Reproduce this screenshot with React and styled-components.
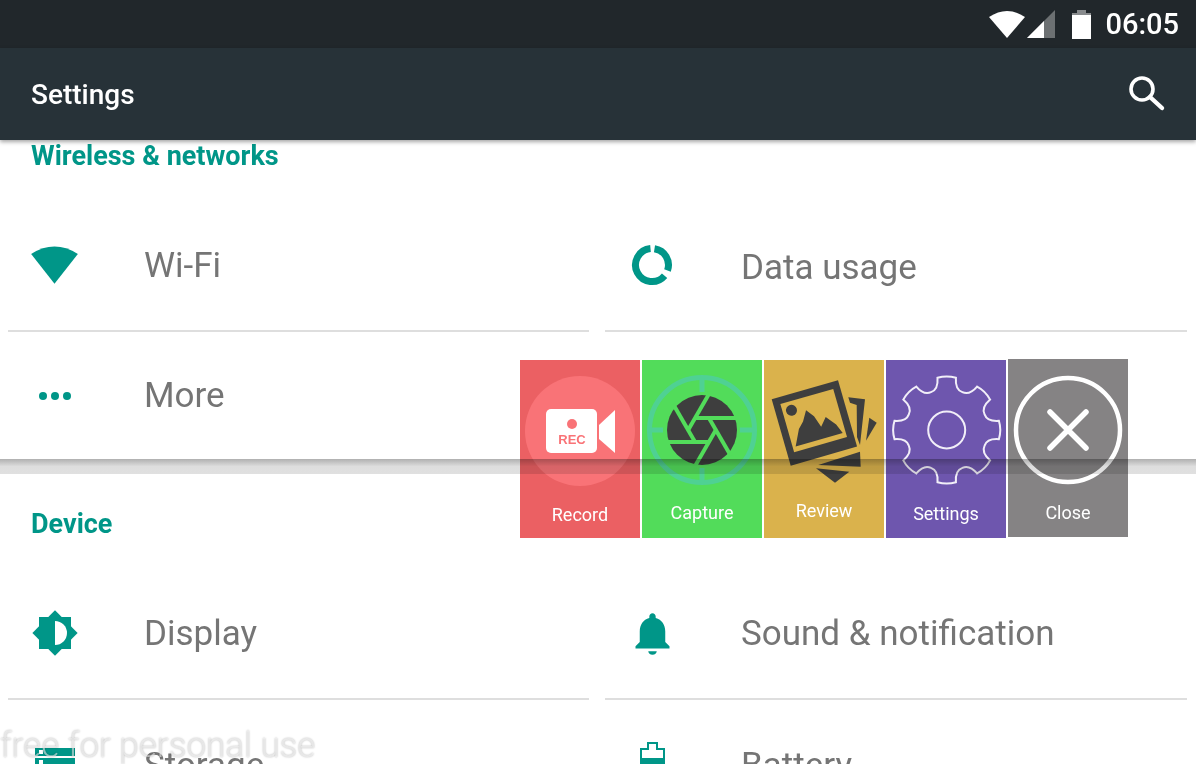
import React from "react";
import styled, { createGlobalStyle } from "styled-components";

const GlobalStyle = createGlobalStyle`
  html, body {
    margin: 0;
    padding: 0;
    background: #fff;
    font-family: "Roboto", "Liberation Sans", sans-serif;
  }
`;

const TEAL = "#009688";

const gearPath = () => {
  const pt = (r, deg) => {
    const rad = ((deg - 90) * Math.PI) / 180;
    return `${(r * Math.cos(rad)).toFixed(2)} ${(r * Math.sin(rad)).toFixed(2)}`;
  };
  let d = `M${pt(53, -10)}`;
  for (let i = 0; i < 8; i++) {
    const a = i * 45;
    d += ` Q${pt(55, a)} ${pt(53, a + 10)}`;
    d += ` C${pt(45, a + 11)} ${pt(41, a + 16)} ${pt(41, a + 22.5)}`;
    d += ` C${pt(41, a + 29)} ${pt(45, a + 34)} ${pt(53, a + 35)}`;
  }
  return d + " Z";
};

const WifiGlyph = ({ size = 48, color = TEAL }) => (
  <svg width={size} height={size * 0.85} viewBox="0 0 48 41">
    <path d="M0 9 Q23.5 -6 47 9 L23.5 39 Z" fill={color} />
  </svg>
);

const DataUsageIcon = () => (
  <svg width="42" height="42" viewBox="-21 -21 42 42" fill="none" stroke={TEAL} strokeWidth="7">
    <path d="M2.5 -16.3 A16.5 16.5 0 0 1 15.5 5.5" />
    <path d="M12.6 10.7 A16.5 16.5 0 1 1 -1.5 -16.4" />
  </svg>
);

const MoreIcon = () => (
  <svg width="36" height="12" viewBox="0 0 36 12" fill={TEAL}>
    <circle cx="6" cy="6" r="4" />
    <circle cx="18" cy="6" r="4" />
    <circle cx="30" cy="6" r="4" />
  </svg>
);

const DisplayIcon = () => (
  <svg width="46" height="46" viewBox="-23 -23 46 46">
    <rect x="-16" y="-16" width="32" height="32" fill={TEAL} />
    <rect x="-16" y="-16" width="32" height="32" fill={TEAL} transform="rotate(45)" />
    <path d="M0 -12 A12 12 0 0 1 0 12 Z" fill="#fff" />
  </svg>
);

const BellIcon = () => (
  <svg width="51" height="51" viewBox="0 0 24 24" fill={TEAL}>
    <path d="M12 22c1.1 0 2-.7 2-1.6h-4c0 .9.89 1.6 2 1.6zm6-6v-5c0-3.07-1.64-5.64-4.5-6.32V4c0-.83-.67-1.5-1.5-1.5s-1.5.67-1.5 1.5v.68C7.63 5.36 6 7.92 6 11v5l-2 2v1h16v-1l-2-2z" />
  </svg>
);

const StorageIcon = () => (
  <svg width="40" height="32" viewBox="0 0 40 32">
    <rect width="40" height="8" fill={TEAL} />
    <rect y="10" width="40" height="8" fill={TEAL} />
    <rect x="4" y="2" width="4" height="4" fill="#fff" />
    <rect x="4" y="12" width="4" height="4" fill="#fff" />
  </svg>
);

const BatteryRowIcon = () => (
  <svg width="25" height="46" viewBox="0 0 25 46">
    <path d="M7 0h11v6h7v40H0V6h7z" fill={TEAL} />
    <path d="M9 2h7v6h7v8H2V8h7z" fill="#fff" />
  </svg>
);

const StatusWifi = () => (
  <svg width="36" height="28" viewBox="0 0 36 28">
    <path d="M0 7 Q18 -5 36 7 L18 28 Z" fill="#fff" />
  </svg>
);

const StatusSignal = () => (
  <svg width="28" height="28" viewBox="0 0 28 28">
    <path d="M0 28 L28 0 V28 Z" fill="#6c7072" />
    <path d="M0 28 L17 11 V28 Z" fill="#fff" />
  </svg>
);

const StatusBattery = () => (
  <svg width="19" height="29" viewBox="0 0 19 29">
    <path d="M5 0h9v3h5v5H0V3h5z" fill="#878a8c" />
    <rect y="5" width="19" height="24" fill="#fff" />
  </svg>
);

const SearchIcon = () => (
  <svg width="38" height="38" viewBox="0 0 38 38" fill="none" stroke="#fff">
    <circle cx="14" cy="14" r="11" strokeWidth="3.6" />
    <path d="M22 22 L34 33" strokeWidth="4.4" strokeLinecap="round" />
  </svg>
);

const RecordArt = () => (
  <svg width="120" height="130" viewBox="0 0 120 130">
    <circle cx="60" cy="71" r="55" fill="#f97377" />
    <rect x="26" y="49" width="51" height="44" rx="5" fill="#fff" />
    <path d="M79 65 L95 50 V93 L79 79 Z" fill="#fff" />
    <circle cx="52" cy="64" r="5" fill="#f97377" />
    <text x="52" y="84" textAnchor="middle" fontFamily="Liberation Sans" fontWeight="700" fontSize="13" fill="#f97377">
      REC
    </text>
  </svg>
);

const CaptureArt = () => (
  <svg width="120" height="130" viewBox="0 0 120 130">
    <g fill="none" stroke="#4fd193" strokeWidth="5">
      <circle cx="60" cy="70" r="52.5" />
      <path d="M60 18V32 M60 108V122 M6 70H21 M98 70H113" />
    </g>
    <circle cx="60" cy="70" r="35" fill="#3e3e3e" />
    <g transform="translate(60 70)" stroke="#52dc5a" strokeWidth="4">
      {[0, 60, 120, 180, 240, 300].map((deg) => (
        <line key={deg} x1="37" y1="-12" x2="-6" y2="-12" transform={`rotate(${deg})`} />
      ))}
    </g>
  </svg>
);

const ReviewArt = () => (
  <svg width="120" height="130" viewBox="0 0 120 130">
    <g fill="#3e3e3e">
      <path d="M84.3 37.3 L101 39.3 L96 85 L93 77 L92.7 45 L86 42.7 Z" />
      <path d="M105.3 57.7 L112.7 62.7 L102 80.7 Z" />
      <path d="M54.3 105 L96 91.7 L96.7 106.7 Z" />
      <path d="M52 108.3 L85.3 111.7 L71 122.7 Z" />
      <g transform="translate(7.7 39.3) rotate(-16)">
        <rect width="69" height="69" />
        <rect x="7" y="7" width="55" height="50" fill="#dab24c" />
        <circle cx="16" cy="16" r="5.5" />
        <path d="M10 52 L18 36 L24 30 L30 20 L36 28 L40 40 L47 32 L55 42 L59 52 Z" />
      </g>
    </g>
  </svg>
);

const SettingsArt = () => (
  <svg width="120" height="130" viewBox="0 0 120 130" fill="none" stroke="#f1eef8" strokeWidth="2">
    <g transform="translate(60.7 70)">
      <path d={gearPath()} />
      <circle r="18.5" />
    </g>
  </svg>
);

const CloseArt = () => (
  <svg width="120" height="130" viewBox="0 0 120 130" fill="none" stroke="#fff">
    <circle cx="60" cy="71" r="52" strokeWidth="4.5" />
    <path d="M42 53 L78 89 M78 53 L42 89" strokeWidth="5.5" strokeLinecap="round" />
  </svg>
);

const tiles = [
  { name: "Record", color: "#eb6063", gap: 14, art: <RecordArt /> },
  { name: "Capture", color: "#52dc5a", gap: 12, art: <CaptureArt /> },
  { name: "Review", color: "#dab24c", gap: 10, art: <ReviewArt /> },
  { name: "Settings", color: "#6e56ae", gap: 13, art: <SettingsArt /> },
  { name: "Close", color: "#858384", gap: 13, lift: 1, art: <CloseArt /> },
];

const App = () => {
  return (
    <>
      <GlobalStyle />
      <Screen>
        <StatusBar>
          <StatusWifi />
          <SignalSlot>
            <StatusSignal />
          </SignalSlot>
          <BatterySlot>
            <StatusBattery />
          </BatterySlot>
          <Clock>06:05</Clock>
        </StatusBar>
        <AppBar>
          <Title>Settings</Title>
          <SearchIcon />
        </AppBar>

        <SectionHead $height={33}>
          <SectionTitle>Wireless &amp; networks</SectionTitle>
        </SectionHead>
        <Gap />
        <RowGrid>
          <Row $divider>
            <IconSlot>
              <WifiGlyph />
            </IconSlot>
            <Label>Wi-Fi</Label>
          </Row>
          <Row $divider>
            <IconSlot>
              <DataUsageIcon />
            </IconSlot>
            <Label $shift={4}>Data usage</Label>
          </Row>
          <Row $height={127}>
            <IconSlot>
              <MoreIcon />
            </IconSlot>
            <Label>More</Label>
          </Row>
        </RowGrid>
        <Band />

        <SectionHead $height={94}>
          <SectionTitle>Device</SectionTitle>
        </SectionHead>
        <RowGrid>
          <Row $divider>
            <IconSlot>
              <DisplayIcon />
            </IconSlot>
            <Label>Display</Label>
          </Row>
          <Row $divider>
            <IconSlot>
              <BellIcon />
            </IconSlot>
            <Label>Sound &amp; notification</Label>
          </Row>
          <Row>
            <IconSlot $top={48}>
              <StorageIcon />
            </IconSlot>
            <Label>Storage</Label>
          </Row>
          <Row>
            <IconSlot $top={42}>
              <BatteryRowIcon />
            </IconSlot>
            <Label>Battery</Label>
          </Row>
        </RowGrid>

        <Launcher>
          {tiles.map((t) => (
            <Tile key={t.name} $color={t.color} $lift={t.lift}>
              {t.art}
              <TileLabel $gap={t.gap}>{t.name}</TileLabel>
            </Tile>
          ))}
        </Launcher>
        <Watermark>free for personal use</Watermark>
      </Screen>
    </>
  );
};

export default App;

const Screen = styled.div`
  position: relative;
  width: 1196px;
  height: 764px;
  overflow: hidden;
  background: #fff;
`;

const StatusBar = styled.div`
  height: 48px;
  background: #21272b;
  display: flex;
  align-items: center;
  justify-content: flex-end;
  padding-right: 17px;
  box-sizing: border-box;
`;

const SignalSlot = styled.div`
  display: flex;
  margin-left: 2px;
`;

const BatterySlot = styled.div`
  display: flex;
  margin-left: 17px;
`;

const Clock = styled.span`
  margin-left: 14px;
  color: #fff;
  font-size: 29px;
  font-weight: 500;
  line-height: 48px;
`;

const AppBar = styled.header`
  position: relative;
  z-index: 1;
  height: 92px;
  background: #273238;
  box-shadow: 0 2px 4px rgba(0, 0, 0, 0.35);
  display: flex;
  align-items: center;
  justify-content: space-between;
  padding: 0 30px 0 31px;
  box-sizing: border-box;
`;

const Title = styled.h1`
  margin: 0;
  color: #fff;
  font-size: 28px;
  font-weight: 500;
`;

const SectionHead = styled.div`
  height: ${(p) => p.$height}px;
  display: flex;
  align-items: flex-end;
  padding: 0 0 ${(p) => (p.$height > 40 ? 27 : 0)}px 31px;
  box-sizing: border-box;
`;

const SectionTitle = styled.h2`
  margin: 0;
  color: ${TEAL};
  font-size: 27px;
  font-weight: 700;
  line-height: 33px;
`;

const Gap = styled.div`
  height: 27px;
`;

const RowGrid = styled.div`
  display: grid;
  grid-template-columns: 581px 582px;
  column-gap: 16px;
  padding-left: 8px;
`;

const Row = styled.div`
  height: ${(p) => p.$height || 130}px;
  display: flex;
  align-items: center;
  box-sizing: content-box;
  border-bottom: ${(p) => (p.$divider ? "2px solid #dedede" : "none")};
`;

const IconSlot = styled.div`
  width: 94px;
  flex: none;
  display: flex;
  justify-content: center;
  ${(p) => p.$top && `align-self: flex-start; padding-top: ${p.$top}px;`}
`;

const Label = styled.span`
  margin-left: 42px;
  padding-top: ${(p) => p.$shift || 0}px;
  color: #757575;
  font-size: 35px;
  font-weight: 400;
`;

const Band = styled.div`
  height: 15px;
  background: linear-gradient(#b0b0b0, #dedede 50%, #e0e0e0);
`;

const Launcher = styled.div`
  position: absolute;
  left: 520px;
  top: 360px;
  display: flex;
  align-items: flex-start;
  gap: 2px;
`;

const Tile = styled.div`
  width: 120px;
  height: 178px;
  margin-top: ${(p) => (p.$lift ? -p.$lift : 0)}px;
  background: ${(p) => p.$color};
  mix-blend-mode: multiply;
  display: flex;
  flex-direction: column;
  align-items: center;
  overflow: hidden;

  svg {
    display: block;
    flex: none;
  }
`;

const TileLabel = styled.span`
  margin-top: ${(p) => p.$gap}px;
  color: #fff;
  font-size: 18px;
  line-height: 22px;
`;

const Watermark = styled.div`
  position: absolute;
  left: 0;
  top: 726px;
  color: rgba(255, 255, 255, 0.55);
  font-size: 35px;
  font-weight: 300;
  line-height: 40px;
  white-space: nowrap;
  text-shadow: 0 0 2px rgba(0, 0, 0, 0.3);
`;
